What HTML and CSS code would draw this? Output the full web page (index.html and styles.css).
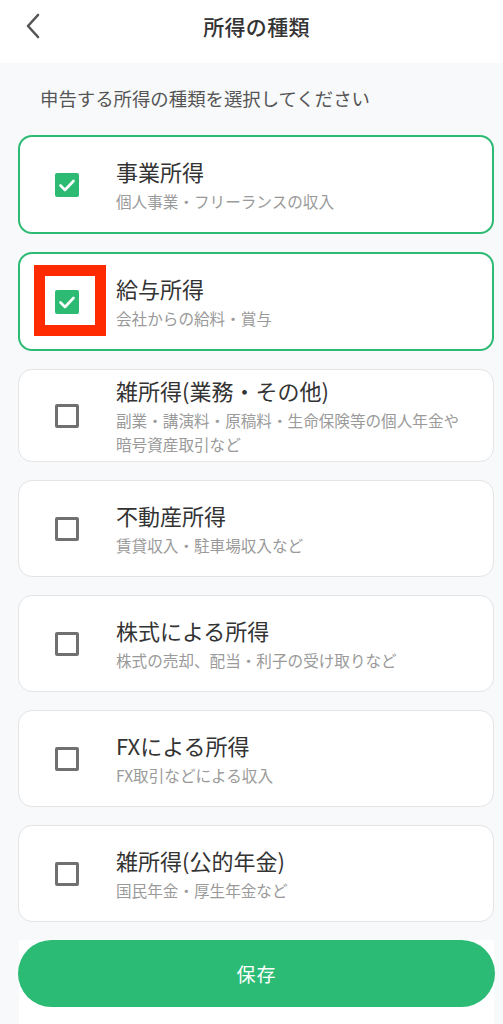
FILE: index.html
```html
<!DOCTYPE html>
<html lang="ja">

<head>
    <meta charset="UTF-8">
    <meta name="viewport" content="width=device-width, initial-scale=1.0">
    <title>所得の種類</title>
    <link rel="stylesheet" href="styles.css">
</head>

<body>
    <!-- Header -->
    <header class="top-bar">
        <button class="back-btn" aria-label="戻る">
            <svg width="18" height="26" viewBox="0 0 18 26">
                <path d="M14 2 L4 13 L14 24" fill="none" stroke="#555" stroke-width="2.6" stroke-linecap="round" stroke-linejoin="round" />
            </svg>
        </button>
        <h1>所得の種類</h1>
    </header>

    <main class="content">
        <p class="lead">申告する所得の種類を選択してください</p>

        <ul class="income-list">
            <li class="income-card selected">
                <span class="check checked">
                    <svg width="24" height="24" viewBox="0 0 24 24"><path d="M5.5 12.5 L10 17 L18.5 8" fill="none" stroke="#fff" stroke-width="2.6" stroke-linecap="round" stroke-linejoin="round" /></svg>
                </span>
                <div class="income-text">
                    <div class="income-title">事業所得</div>
                    <div class="income-desc">個人事業・フリーランスの収入</div>
                </div>
            </li>
            <li class="income-card selected">
                <span class="check checked">
                    <svg width="24" height="24" viewBox="0 0 24 24"><path d="M5.5 12.5 L10 17 L18.5 8" fill="none" stroke="#fff" stroke-width="2.6" stroke-linecap="round" stroke-linejoin="round" /></svg>
                    <!-- annotation frame -->
                    <span class="mark-frame"></span>
                </span>
                <div class="income-text">
                    <div class="income-title">給与所得</div>
                    <div class="income-desc">会社からの給料・賞与</div>
                </div>
            </li>
            <li class="income-card multi">
                <span class="check"></span>
                <div class="income-text">
                    <div class="income-title">雑所得(業務・その他)</div>
                    <div class="income-desc">副業・講演料・原稿料・生命保険等の個人年金や暗号資産取引など</div>
                </div>
            </li>
            <li class="income-card">
                <span class="check"></span>
                <div class="income-text">
                    <div class="income-title">不動産所得</div>
                    <div class="income-desc">賃貸収入・駐車場収入など</div>
                </div>
            </li>
            <li class="income-card">
                <span class="check"></span>
                <div class="income-text">
                    <div class="income-title">株式による所得</div>
                    <div class="income-desc">株式の売却、配当・利子の受け取りなど</div>
                </div>
            </li>
            <li class="income-card">
                <span class="check"></span>
                <div class="income-text">
                    <div class="income-title">FXによる所得</div>
                    <div class="income-desc">FX取引などによる収入</div>
                </div>
            </li>
            <li class="income-card">
                <span class="check"></span>
                <div class="income-text">
                    <div class="income-title">雑所得(公的年金)</div>
                    <div class="income-desc">国民年金・厚生年金など</div>
                </div>
            </li>
        </ul>

        <!-- Save button -->
        <div class="footer-bar">
            <button class="save-btn">保存</button>
        </div>
    </main>
</body>

</html>
```

FILE: styles.css
```css
body {
    font-family: "Noto Sans CJK JP", "Noto Sans", sans-serif;
    background-color: #f8f9fb;
    color: #333;
    margin: 0;
    padding: 0;
    height: 1024px;
    overflow: hidden;
}

.top-bar {
    height: 63px;
    background-color: #fff;
    display: flex;
    align-items: center;
    justify-content: center;
    position: relative;
}

.top-bar h1 {
    margin: 0;
    font-size: 21px;
    font-weight: 500;
    color: #333;
    letter-spacing: 0.3px;
    padding: 0 0 12px 10px;
}

.back-btn {
    position: absolute;
    left: 24px;
    top: 13px;
    background: none;
    border: none;
    padding: 0;
    cursor: pointer;
}

.content {
    padding: 0 9px 0 18px;
}

.lead {
    margin: 0;
    padding: 21px 0 23px 22px;
    font-size: 18.4px;
    line-height: 28px;
    color: #555;
}

.income-list {
    list-style: none;
    margin: 0;
    padding: 0;
    display: flex;
    flex-direction: column;
    gap: 18px;
}

.income-card {
    box-sizing: border-box;
    min-height: 97px;
    background-color: #fff;
    border: 1px solid #e3e4e6;
    border-radius: 14px;
    display: flex;
    align-items: center;
    gap: 37px;
    padding: 5px 24px 5px 36px;
}

.income-card.multi {
    min-height: 0;
}

.income-card.selected {
    border: 2px solid #2dbb74;
    padding-left: 35px;
    min-height: 99px;
}

.check {
    flex: none;
    position: relative;
    box-sizing: border-box;
    width: 24px;
    height: 24px;
    border: 3px solid #707070;
    border-radius: 2px;
}

.check.checked {
    border: none;
    background-color: #2dbb74;
}

.check svg {
    display: block;
}

.mark-frame {
    position: absolute;
    left: -21px;
    top: -25px;
    width: 72px;
    height: 71px;
    box-sizing: border-box;
    border: 11px solid #ff2a00;
}

.income-text {
    flex: 1;
}

.income-title {
    font-size: 22px;
    line-height: 30px;
    color: #333;
}

.income-desc {
    font-size: 15.6px;
    line-height: 24px;
    color: #9a9a9a;
    margin-top: 3px;
}

.footer-bar {
    margin: 18px 0 0 1px;
    background-color: #fff;
    height: 100px;
}

.save-btn {
    display: block;
    width: 477px;
    height: 67px;
    margin: 1px 0 0 -1px;
    border: none;
    border-radius: 34px;
    background-color: #2bbb74;
    color: #fff;
    font-family: inherit;
    font-size: 19px;
    letter-spacing: 1px;
    cursor: pointer;
}
```
